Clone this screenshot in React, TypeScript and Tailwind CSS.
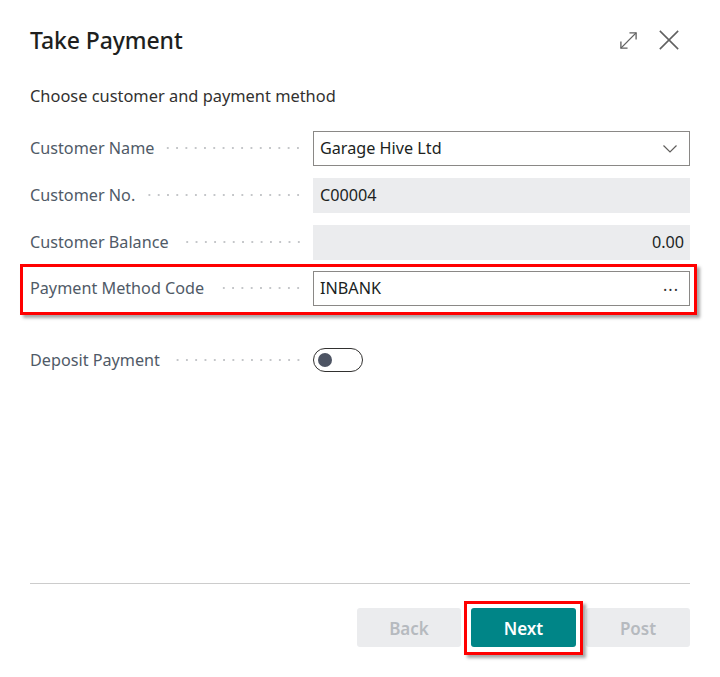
import React from "react";

const font = { fontFamily: '"Noto Sans", "Open Sans", sans-serif' };

function Label({ text }: { text: string }) {
  return (
    <div className="flex items-center w-[275px] pr-[2px] shrink-0">
      <span className="text-[16.2px] text-[#505a67] whitespace-nowrap leading-none">{text}</span>
      <span className="flex-1 ml-[12px] h-[4px] bg-[radial-gradient(circle,#c4c6c9_1px,transparent_1.4px)] bg-[length:9.3px_4px] bg-repeat-x bg-[position:right_center]" />
    </div>
  );
}

export default function App() {
  return (
    <div className="w-[720px] h-[677px] bg-white flex flex-col px-[30px] text-[#212121]" style={font}>
      <div className="flex items-center justify-between h-[30px] mt-[25px]">
        <h1 className="text-[23px] font-medium text-[#201f1e] tracking-[-0.1px]">Take Payment</h1>
        <div className="flex items-center gap-[20px] mr-[10px]">
          <svg width="19" height="19" viewBox="0 0 20 20" fill="none" stroke="#616161" strokeWidth="1.4">
            <path d="M2 18 L18 2" />
            <path d="M11 2 H18 V9" />
            <path d="M2 11 V18 H9" />
          </svg>
          <svg width="22" height="22" viewBox="0 0 24 24" fill="none" stroke="#616161" strokeWidth="1.7">
            <path d="M2 2 L22 22 M22 2 L2 22" />
          </svg>
        </div>
      </div>
      <p className="mt-[30px] text-[16.4px] text-[#323130] leading-[22px]">Choose customer and payment method</p>

      <div className="flex items-center mt-[24px] h-[35px]">
        <Label text="Customer Name" />
        <div className="ml-[8px] flex-1 h-[35px] border border-[#8a8886] flex items-center justify-between px-[6px] text-[16.2px] text-[#201f1e]">
          <span>Garage Hive Ltd</span>
          <svg width="14" height="8" viewBox="0 0 14 8" fill="none" stroke="#605e5c" strokeWidth="1.2" className="mr-[6px]">
            <path d="M0.5 0.5 L7 7 L13.5 0.5" />
          </svg>
        </div>
      </div>

      <div className="flex items-center mt-[12px] h-[35px]">
        <Label text="Customer No." />
        <div className="ml-[8px] flex-1 h-[35px] bg-[#ebecee] flex items-center px-[7px] text-[16.2px] text-[#201f1e]">C00004</div>
      </div>

      <div className="flex items-center mt-[12px] h-[35px]">
        <Label text="Customer Balance" />
        <div className="ml-[8px] flex-1 h-[35px] bg-[#ebecee] flex items-center justify-end px-[6px] text-[16.2px] text-[#201f1e]">0.00</div>
      </div>

      <div className="relative flex items-center mt-[11px] h-[35px]">
        <Label text="Payment Method Code" />
        <div className="ml-[8px] flex-1 h-[35px] border border-[#8a8886] flex items-center justify-between px-[6px] text-[16.2px] text-[#201f1e]">
          <span>INBANK</span>
          <span className="mr-[4px] text-[#323130] tracking-[1px] leading-none -mt-[6px]">...</span>
        </div>
        <div className="absolute left-[-10px] right-[-7px] top-[-7px] bottom-[-9px] border-[3px] border-[#ff0000] shadow-[3px_3px_3px_rgba(0,0,0,0.35)] pointer-events-none" />
      </div>

      <div className="flex items-center mt-[42px] h-[24px]">
        <Label text="Deposit Payment" />
        <div className="ml-[8px] w-[50px] h-[24px] rounded-full border border-[#323130] flex items-center pl-[4px]">
          <div className="w-[14px] h-[14px] rounded-full bg-[#4d5463]" />
        </div>
      </div>

      <div className="flex-1" />
      <div className="h-px bg-[#cccccc]" />
      <div className="flex justify-end gap-[10px] mt-[24px] mb-[30px]">
        <button className="w-[104px] h-[39px] pt-[3px] rounded-[3px] bg-[#ebecee] text-[#b6babf] text-[17px] font-semibold">Back</button>
        <div className="relative">
          <button className="w-[105px] h-[39px] pt-[3px] rounded-[3px] bg-[#008587] text-white text-[17px] font-semibold">Next</button>
          <div className="absolute left-[-7px] right-[-7px] top-[-7px] bottom-[-8px] border-[3px] border-[#ff0000] shadow-[3px_3px_3px_rgba(0,0,0,0.35)] pointer-events-none" />
        </div>
        <button className="w-[104px] h-[39px] pt-[3px] rounded-[3px] bg-[#ebecee] text-[#b6babf] text-[17px] font-semibold">Post</button>
      </div>
    </div>
  );
}
